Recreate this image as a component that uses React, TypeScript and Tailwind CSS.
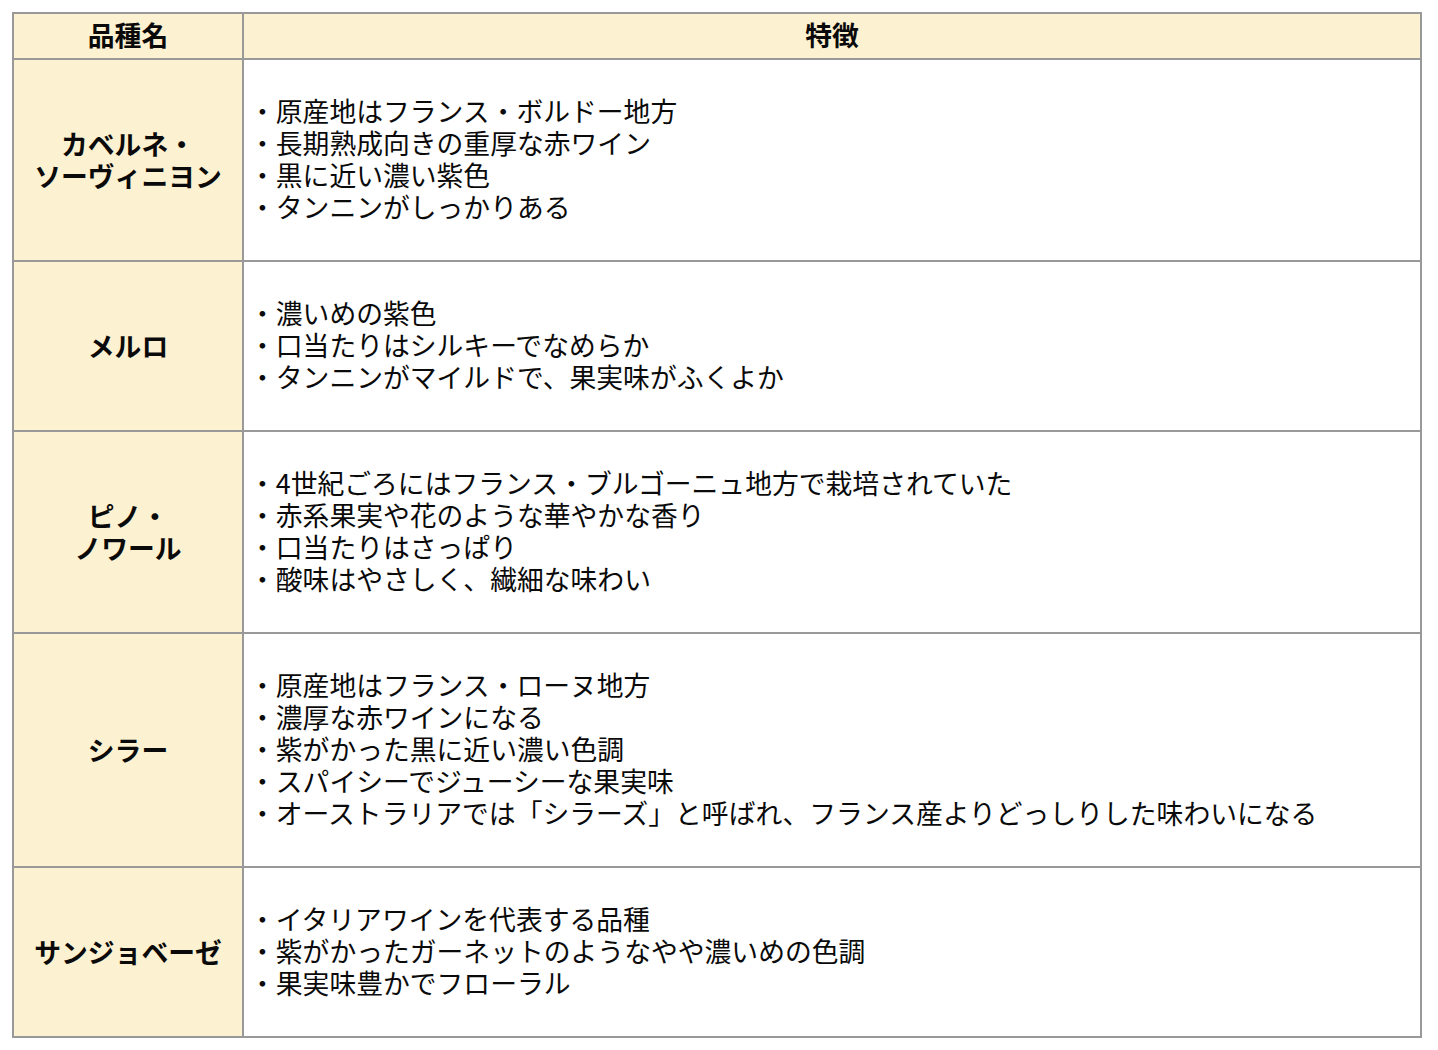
const rows: { name: string[]; points: string[] }[] = [
  {
    name: ['カベルネ・', 'ソーヴィニヨン'],
    points: [
      '原産地はフランス・ボルドー地方',
      '長期熟成向きの重厚な赤ワイン',
      '黒に近い濃い紫色',
      'タンニンがしっかりある',
    ],
  },
  {
    name: ['メルロ'],
    points: ['濃いめの紫色', '口当たりはシルキーでなめらか', 'タンニンがマイルドで、果実味がふくよか'],
  },
  {
    name: ['ピノ・', 'ノワール'],
    points: [
      '4世紀ごろにはフランス・ブルゴーニュ地方で栽培されていた',
      '赤系果実や花のような華やかな香り',
      '口当たりはさっぱり',
      '酸味はやさしく、繊細な味わい',
    ],
  },
  {
    name: ['シラー'],
    points: [
      '原産地はフランス・ローヌ地方',
      '濃厚な赤ワインになる',
      '紫がかった黒に近い濃い色調',
      'スパイシーでジューシーな果実味',
      'オーストラリアでは「シラーズ」と呼ばれ、フランス産よりどっしりした味わいになる',
    ],
  },
  {
    name: ['サンジョベーゼ'],
    points: ['イタリアワインを代表する品種', '紫がかったガーネットのようなやや濃いめの色調', '果実味豊かでフローラル'],
  },
]

export default function App() {
  return (
    <div
      className="min-h-screen bg-white pl-[12px] pt-[12px] text-[26.8px] leading-[32px] text-[#0a0a0a]"
      style={{ fontFamily: '"Noto Sans CJK JP", "Noto Sans", sans-serif' }}
    >
      <table className="w-[1410px] border-collapse border-2 border-[#999]">
        <thead>
          <tr className="bg-[#fcf1d0]">
            <th className="w-[230px] border-2 border-[#999] pt-[5px] pb-[7px] text-center font-bold">品種名</th>
            <th className="border-2 border-[#999] pt-[5px] pb-[7px] text-center font-bold">特徴</th>
          </tr>
        </thead>
        <tbody>
          {rows.map((r) => (
            <tr key={r.name.join('')}>
              <td className="border-2 border-[#999] bg-[#fcf1d0] py-[36px] text-center align-middle font-bold">
                {r.name.map((n) => (
                  <div key={n}>{n}</div>
                ))}
              </td>
              <td className="border-2 border-[#999] bg-white pl-[5px] pr-0 pt-[35px] pb-[37px] align-middle">
                {r.points.map((p) => (
                  <div key={p} className="whitespace-nowrap">
                    ・{p}
                  </div>
                ))}
              </td>
            </tr>
          ))}
        </tbody>
      </table>
    </div>
  )
}
